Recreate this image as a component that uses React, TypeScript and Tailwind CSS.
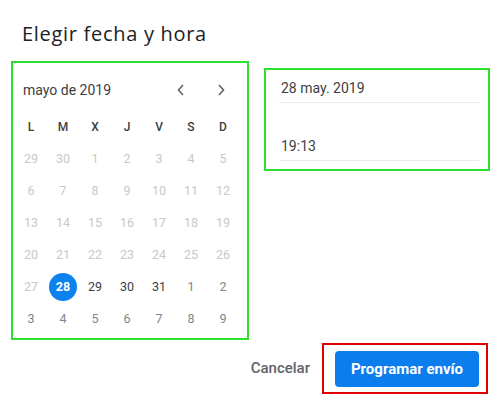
import React from "react";

type Day = { n: number; tone: "past" | "current" | "next" | "selected" };

const weekdays = ["L", "M", "X", "J", "V", "S", "D"];

function buildDays(): Day[] {
    const days: Day[] = [];
    days.push({ n: 29, tone: "past" }, { n: 30, tone: "past" });
    for (let d = 1; d <= 31; d++) {
        if (d < 28) days.push({ n: d, tone: "past" });
        else if (d === 28) days.push({ n: d, tone: "selected" });
        else days.push({ n: d, tone: "current" });
    }
    for (let d = 1; d <= 9; d++) days.push({ n: d, tone: "next" });
    return days;
}

const toneClass: Record<Day["tone"], string> = {
    past: "text-[#c8c8c8]",
    current: "text-[#3c4043]",
    next: "text-[#80868b]",
    selected: "text-white font-bold",
};

function Chevron({ dir }: { dir: "left" | "right" }) {
    return (
        <svg width="10" height="12" viewBox="0 0 10 12" fill="none">
            <path
                d={dir === "left" ? "M7 1 L2.5 6 L7 11" : "M3 1 L7.5 6 L3 11"}
                stroke="#5f6368"
                strokeWidth="1.6"
            />
        </svg>
    );
}

export default function App() {
    const days = buildDays();

    return (
        <div className="w-[501px] h-[408px] bg-white flex flex-col font-['Roboto',sans-serif]">
            <h2 className="ml-[22px] pt-[20px] text-[20px] leading-[28px] tracking-[0.7px] text-[#202124] font-['Open_Sans',sans-serif]">
                Elegir fecha y hora
            </h2>

            <div className="flex items-start mt-[13px]">
                {/* calendar */}
                <div className="ml-[11px] w-[238px] h-[279px] border-2 border-[#2ee02e]">
                    <div className="h-[48px] pt-[6px] flex items-center pl-[10px] pr-[6px]">
                        <span className="text-[14px] text-[#3c4043] flex-1">mayo de 2019</span>
                        <button className="w-[40px] h-[32px] flex items-center justify-center">
                            <Chevron dir="left" />
                        </button>
                        <button className="w-[40px] h-[32px] flex items-center justify-center">
                            <Chevron dir="right" />
                        </button>
                    </div>
                    <div className="ml-[2px] grid grid-cols-[repeat(7,32px)] auto-rows-[32px]">
                        {weekdays.map((w) => (
                            <div key={w} className="flex items-center justify-center text-[12px] font-medium text-[#3c4043]">
                                {w}
                            </div>
                        ))}
                        {days.map((d, i) => (
                            <div key={i} className="flex items-center justify-center">
                                <span
                                    className={`w-[28px] h-[28px] rounded-full flex items-center justify-center text-[12.5px] ${toneClass[d.tone]} ${
                                        d.tone === "selected" ? "bg-[#0c82ee]" : ""
                                    }`}
                                >
                                    {d.n}
                                </span>
                            </div>
                        ))}
                    </div>
                </div>

                {/* date + time fields */}
                <div className="ml-[15px] mt-[7px] w-[226px] h-[103px] border-2 border-[#2ee02e] pl-[13px] pr-[9px]">
                    <div className="h-[33px] flex items-end pb-[4px] pl-[2px] border-b border-[#e8eaed] text-[14px] leading-[20px] text-[#3c4043]">
                        28 may. 2019
                    </div>
                    <div className="h-[58px] flex items-end pb-[4px] pl-[2px] border-b border-[#e8eaed] text-[14px] leading-[20px] text-[#3c4043]">
                        19:13
                    </div>
                </div>
            </div>

            <div className="mt-[3px] flex justify-end items-center pr-[13px]">
                <button className="mr-[12px] text-[15px] font-medium text-[#5f6368]">Cancelar</button>
                <div className="border-2 border-[#e00000]">
                    <button className="ml-[11px] mt-[6px] mr-[7px] mb-[5px] w-[144px] h-[36px] rounded-[4px] bg-[#0b7ded] text-white text-[15px] font-bold">
                        Programar envío
                    </button>
                </div>
            </div>
        </div>
    );
}
